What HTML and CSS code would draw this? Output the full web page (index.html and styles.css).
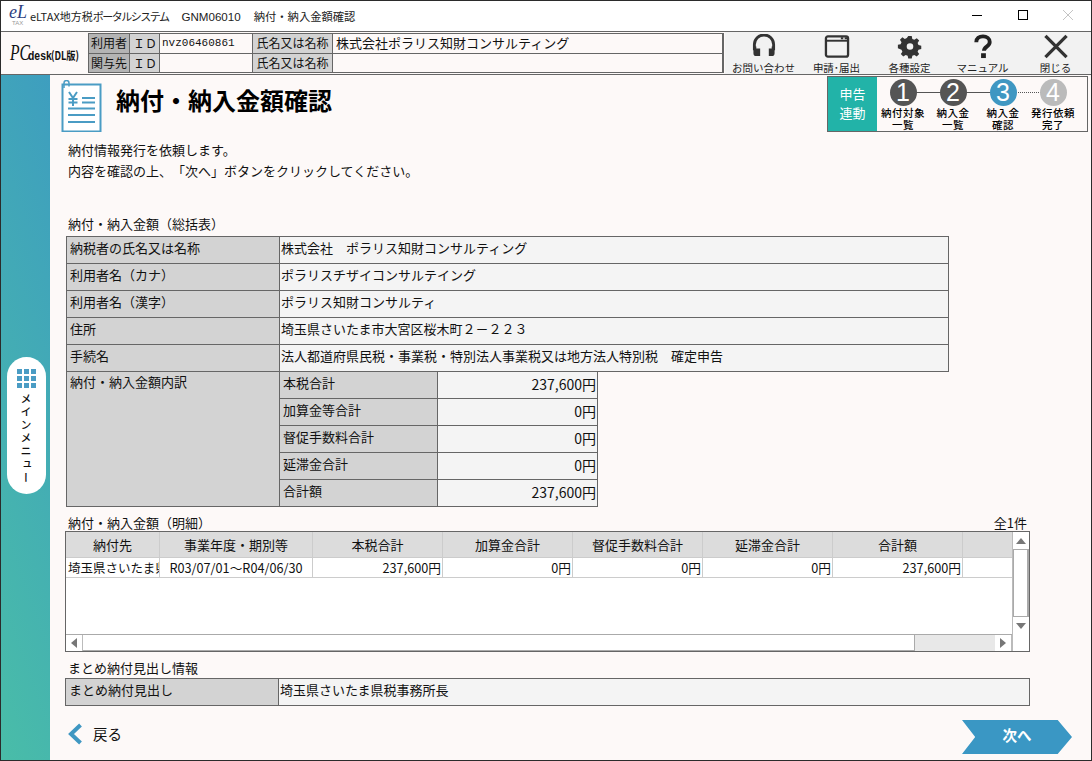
FILE: index.html
```html
<!DOCTYPE html>
<html lang="ja">
<head>
<meta charset="utf-8">
<title>納付・納入金額確認</title>
<link rel="stylesheet" href="styles.css">
</head>
<body>
<div class="window">
  <header class="titlebar">
    <div class="applogo"><span class="applogo-el">eL</span><span class="applogo-tax">TAX</span></div>
    <div class="apptitle">eLTAX地方税<span class="kana">ポータルシステム</span><span class="gap1">GNM06010</span><span class="gap2">納付・納入金額確認</span></div>
    <div class="winctl">
      <svg width="12" height="12" viewBox="0 0 12 12"><path d="M1 6.500h10" stroke="#000" fill="none"/></svg>
      <svg width="12" height="12" viewBox="0 0 12 12"><rect x="1.500" y="1.500" width="9" height="9" stroke="#000" fill="none"/></svg>
      <svg width="12" height="12" viewBox="0 0 12 12"><path d="M1 1l10 10M11 1L1 11" stroke="#c4c4c4" fill="none"/></svg>
    </div>
  </header>
  <div class="toolbar">
    <div class="brand"><span class="brand-pc">PC</span><span class="brand-desk">desk</span><span class="brand-dl">(DL版)</span></div>
    <div class="userinfo">
      <div class="ui-h ui-dark">利用者</div><div class="ui-h ui-id">ＩＤ</div><div class="ui-v ui-mono">nvz06460861</div><div class="ui-h">氏名又は名称</div><div class="ui-v">株式会社ポラリス知財コンサルティング</div>
      <div class="ui-h ui-dark">関与先</div><div class="ui-h ui-id">ＩＤ</div><div class="ui-v"></div><div class="ui-h">氏名又は名称</div><div class="ui-v"></div>
    </div>
    <nav class="tools">
      <div class="tool">
        <svg width="26" height="26" viewBox="0 0 26 26"><path d="M3 17V11a10 10 0 0 1 20 0v6" fill="none" stroke="#333" stroke-width="3"/><path d="M2 13h3v2h4v8H5a3 3 0 0 1-3-3zM24 13h-3v2h-3v8h3a3 3 0 0 0 3-3z" fill="#333"/></svg>
        <span>お問い合わせ</span>
      </div>
      <div class="tool">
        <svg width="26" height="26" viewBox="0 0 26 26"><rect x="1.500" y="2.500" width="23" height="21" rx="2" fill="none" stroke="#333" stroke-width="2.400"/><path d="M2 7h22" stroke="#333" stroke-width="2"/><path d="M17 3.500h2.500v2H17zM21 3.500h2.500v2H21z" fill="#333"/></svg>
        <span>申請･届出</span>
      </div>
      <div class="tool">
        <svg width="26" height="26" viewBox="0 0 26 26"><path d="M11 1h4l.7 3.200 2.300 1 2.800-1.800 2.800 2.800-1.800 2.800 1 2.300 3.200.7v4l-3.200.7-1 2.300 1.800 2.800-2.800 2.800-2.800-1.800-2.300 1-.7 3.200h-4l-.7-3.200-2.300-1-2.800 1.800-2.800-2.800 1.800-2.800-1-2.300L-1 15v-4l3.200-.7 1-2.300-1.800-2.800 2.800-2.800 2.800 1.800 2.300-1zM13 9.200a3.800 3.800 0 1 0 0 7.600 3.800 3.800 0 0 0 0-7.600z" fill="#333" fill-rule="evenodd" transform="translate(1.300 1.300) scale(.9)"/></svg>
        <span>各種設定</span>
      </div>
      <div class="tool">
        <svg width="26" height="26" viewBox="0 0 26 26"><path d="M6 8.500C6 4.500 9 2.500 13 2.500s7 2.300 7 5.800c0 5-6 4.700-6 9.200" fill="none" stroke="#222" stroke-width="4"/><rect x="11" y="20" width="5" height="5" fill="#222"/></svg>
        <span>マニュアル</span>
      </div>
      <div class="tool">
        <svg width="26" height="26" viewBox="0 0 26 26"><path d="M2 2l22 22M24 2L2 24" stroke="#333" stroke-width="3.400" fill="none"/></svg>
        <span>閉じる</span>
      </div>
    </nav>
  </div>
  <div class="body">
    <aside class="sidebar">
      <div class="mainmenu">
        <div class="dots"><i></i><i></i><i></i><i></i><i></i><i></i><i></i><i></i><i></i></div>
        <div class="mm-text">メインメニュー</div>
      </div>
    </aside>
    <main class="main">
      <div class="pagehead">
        <svg class="pageicon" width="42" height="52" viewBox="0 0 42 52"><path d="M2.500 4.500h38v47h-38z" fill="#fff" stroke="#4a9cc4" stroke-width="2"/><path d="M4 8V3a2.500 2.500 0 0 1 5 0v3.500" fill="none" stroke="#4a9cc4" stroke-width="1.500"/><path d="M9 12l4 6 4-6M13 18v8M8.500 19h9M8.500 22.500h9" fill="none" stroke="#4a9cc4" stroke-width="2"/><path d="M22 18h13M22 22.500h13M8 28.500h27M8 35h27M8 42h27" stroke="#4a9cc4" stroke-width="2"/></svg>
        <h1 class="pagetitle">納付・納入金額確認</h1>
        <div class="stepper">
          <div class="link">申告<br>連動</div>
          <div class="steps">
            <div class="step"><b class="num n1">1</b><span>納付対象<br>一覧</span></div>
            <div class="step"><b class="num n1">2</b><span>納入金<br>一覧</span></div>
            <div class="step"><b class="num n3">3</b><span>納入金<br>確認</span></div>
            <div class="step"><b class="num n4">4</b><span>発行依頼<br>完了</span></div>
          </div>
        </div>
      </div>
      <div class="intro">納付情報発行を依頼します。<br>内容を確認の上、「次へ」ボタンをクリックしてください。</div>
      <div class="cap cap-first">納付・納入金額（総括表）</div>
      <div class="summary">
        <div class="th">納税者の氏名又は名称</div><div class="td">株式会社　ポラリス知財コンサルティング</div>
        <div class="th">利用者名（カナ）</div><div class="td">ポラリスチザイコンサルテイング</div>
        <div class="th">利用者名（漢字）</div><div class="td">ポラリス知財コンサルティ</div>
        <div class="th">住所</div><div class="td">埼玉県さいたま市大宮区桜木町２－２２３</div>
        <div class="th">手続名</div><div class="td">法人都道府県民税・事業税・特別法人事業税又は地方法人特別税　確定申告</div>
        <div class="th th-tall">納付・納入金額内訳</div>
        <div class="breakdown">
          <div class="bh">本税合計</div><div class="bv">237,600円</div>
          <div class="bh">加算金等合計</div><div class="bv">0円</div>
          <div class="bh">督促手数料合計</div><div class="bv">0円</div>
          <div class="bh">延滞金合計</div><div class="bv">0円</div>
          <div class="bh">合計額</div><div class="bv">237,600円</div>
        </div>
      </div>
      <div class="capline"><span>納付・納入金額（明細）</span><span class="count">全1件</span></div>
      <div class="grid">
        <div class="grid-view">
          <div class="gr gr-head">
            <div class="c c1">納付先</div><div class="c c2">事業年度・期別等</div><div class="c c3">本税合計</div><div class="c c3">加算金合計</div><div class="c c3">督促手数料合計</div><div class="c c3">延滞金合計</div><div class="c c3">合計額</div><div class="c c4"></div>
          </div>
          <div class="gr gr-row">
            <div class="c c1 cl">埼玉県さいたま県</div><div class="c c2">R03/07/01～R04/06/30</div><div class="c c3 cr">237,600円</div><div class="c c3 cr">0円</div><div class="c c3 cr">0円</div><div class="c c3 cr">0円</div><div class="c c3 cr">237,600円</div><div class="c c4"></div>
          </div>
        </div>
        <div class="vbar">
          <div class="sb-btn"><svg width="10" height="6" viewBox="0 0 10 6"><path d="M5 0l5 6H0z" fill="#777"/></svg></div>
          <div class="sb-thumb"></div>
          <div class="sb-btn"><svg width="10" height="6" viewBox="0 0 10 6"><path d="M0 0h10L5 6z" fill="#777"/></svg></div>
        </div>
        <div class="hbar">
          <div class="sb-btn"><svg width="6" height="10" viewBox="0 0 6 10"><path d="M6 0v10L0 5z" fill="#777"/></svg></div>
          <div class="sb-hthumb"></div>
          <div class="sb-track"></div>
          <div class="sb-btn"><svg width="6" height="10" viewBox="0 0 6 10"><path d="M0 0l6 5-6 5z" fill="#777"/></svg></div>
        </div>
        <div class="corner"></div>
      </div>
      <div class="cap cap-sum">まとめ納付見出し情報</div>
      <div class="sumrow"><div class="th">まとめ納付見出し</div><div class="td">埼玉県さいたま県税事務所長</div></div>
      <div class="footer">
        <div class="back"><svg width="16" height="22" viewBox="0 0 16 22"><path d="M13.500 2L4 11l9.500 9" fill="none" stroke="#3f97c2" stroke-width="4"/></svg><span class="back-label">戻る</span></div>
        <div class="next">次へ</div>
      </div>
    </main>
  </div>
</div>
</body>
</html>
```
FILE: styles.css
```css
* { box-sizing: border-box; }
html, body { margin: 0; padding: 0; }
body { width: 1092px; height: 761px; overflow: hidden; font-family: "Noto Sans CJK JP", "Noto Sans", sans-serif; font-size: 13px; color: #111; background: #fff; text-spacing-trim: space-all; }
.window { width: 1092px; height: 761px; border: 1px solid #2b2b2b; display: flex; flex-direction: column; overflow: hidden; }

.titlebar { height: 30px; flex: none; background: #fff; display: flex; align-items: center; padding-left: 8px; }
.applogo { width: 17px; height: 24px; margin-right: 4px; }
.applogo-el { font-family: "Liberation Serif", serif; font-style: italic; font-size: 18px; line-height: 16px; color: #2d3f7f; display: block; }
.applogo-tax { font-family: "Liberation Sans", sans-serif; font-size: 6px; line-height: 6px; color: #999; display: block; padding-left: 3px; }
.apptitle { font-size: 11px; color: #222; white-space: nowrap; }
.kana { letter-spacing: -1.500px; }
.gap1 { margin-left: 13px; font-family: "Liberation Sans", sans-serif; font-size: 11.600px; }
.gap2 { margin-left: 13px; font-size: 11.300px; }
.winctl { margin-left: auto; margin-bottom: 2px; display: flex; gap: 33.500px; padding-right: 17px; }

.toolbar { height: 44px; flex: none; display: flex; border-top: 1px solid #666; border-bottom: 1px solid #666; background: #fdf9f8; }
.brand { width: 83px; flex: none; margin-left: 4px; display: flex; align-items: baseline; padding: 8px 0 0 5px; white-space: nowrap; }
.brand-pc { font-family: "Liberation Serif", serif; font-style: italic; font-size: 23px; line-height: 26px; color: #111; display: inline-block; width: 18px; transform: scaleX(.68); transform-origin: left; }
.brand-desk { font-family: "Liberation Sans", sans-serif; font-weight: 700; font-size: 13px; display: inline-block; transform: scaleX(.8); transform-origin: left; width: 23px; }
.brand-dl { font-size: 11.500px; font-weight: 700; display: inline-block; transform: scaleX(.8); transform-origin: left; }
.userinfo { width: 636px; flex: none; height: 40px; margin-top: 1px; display: grid; grid-template-columns: 41px 30px 93px 80px 1fr; grid-template-rows: 20px 19px; border: 1px solid #666; border-bottom: 0; font-size: 12px; }
.ui-h { background: #d3d3d3; border-right: 1px solid #666; border-bottom: 1px solid #666; text-align: center; line-height: 18px; white-space: nowrap; }
.ui-dark { background: #b4b4b4; }
.ui-id { text-align: right; padding-right: 2px; }
.ui-v { background: #fdf9f8; border-right: 1px solid #666; border-bottom: 1px solid #666; padding-left: 3px; line-height: 18px; white-space: nowrap; font-size: 13px; }
.ui-mono { font-family: "Liberation Mono", monospace; font-size: 11px; padding-left: 2px; }
.tools { margin-left: 1px; flex: 1; display: flex; background: #f2f2f2; padding-left: 6px; }
.tool { width: 65px; margin-right: 8px; display: flex; flex-direction: column; align-items: center; font-size: 10.500px; line-height: 12px; white-space: nowrap; padding-top: 2px; color: #222; }
.tool span { margin-top: 3px; }

.body { flex: 1; display: flex; min-height: 0; background: #fdf9f8; }
.sidebar { width: 49px; flex: none; background: linear-gradient(70deg, #49bda8 0%, #3e9ebf 100%); display: flex; align-items: center; justify-content: center; }
.mainmenu { width: 39px; height: 137px; margin-top: 16px; margin-left: 1px; border-radius: 20px; background: #fff; display: flex; flex-direction: column; align-items: center; padding-top: 12px; }
.dots { width: 19px; display: grid; grid-template-columns: repeat(3, 5px); gap: 2px; }
.dots i { width: 5px; height: 5px; background: #4a9cc4; display: block; }
.mm-text { writing-mode: vertical-rl; font-size: 11px; font-weight: 500; letter-spacing: 2.200px; margin-top: 5px; line-height: 12px; }

.main { flex: 1; min-width: 0; padding-left: 16px; display: flex; flex-direction: column; }
.pagehead { height: 57px; flex: none; display: flex; align-items: flex-start; }
.pageicon { margin-left: -6px; margin-top: 5px; flex: none; }
.pagetitle { margin: 8px 0 0 14px; font-size: 24px; line-height: 34px; font-weight: 700; color: #000; white-space: nowrap; }
.stepper { margin-left: auto; margin-right: 3px; margin-top: 1px; width: 261px; height: 56px; border: 1px solid #666; display: flex; }
.link { width: 49px; background: #22b3a8; color: #fff; font-size: 13px; line-height: 19px; text-align: center; padding-top: 7px; }
.steps { flex: 1; display: flex; padding-left: 1px; background-image: linear-gradient(#555, #555), repeating-linear-gradient(90deg, #555 0 1px, transparent 1px 2px); background-size: 100px 1px, 50px 1px; background-repeat: no-repeat, no-repeat; background-position: 25px 15px, 125px 15px; }
.step { width: 50px; display: flex; flex-direction: column; align-items: center; padding-top: 2px; }
.step span { font-size: 10.500px; line-height: 12px; letter-spacing: .5px; text-align: center; font-weight: 500; white-space: nowrap; margin-top: 1px; color: #000; }
.num { width: 27px; height: 27px; border-radius: 50%; color: #fff; font: 400 25px/27px "Liberation Sans", sans-serif; text-align: center; display: block; flex: none; }
.n1 { background: #555; }
.n3 { background: #3f97c2; }
.n4 { background: #bbb; }

.intro { line-height: 21px; padding-top: 7px; padding-left: 2px; font-size: 13px; height: 53px; flex: none; }
.cap { font-size: 13px; line-height: 16px; flex: none; padding-left: 2px; }
.cap-first { margin-top: 31px; margin-bottom: 4px; }
.summary { width: 883px; flex: none; display: grid; grid-template-columns: 213px 1fr; border: 1px solid #666; border-width: 1px 0 0 1px; }
.th { background: #d3d3d3; border-right: 1px solid #666; border-bottom: 1px solid #666; height: 27px; padding: 2px 0 0 3px; line-height: 18px; white-space: nowrap; }
.td { background: #f4f4f4; border-right: 1px solid #666; border-bottom: 1px solid #666; height: 27px; padding: 2px 0 0 1px; line-height: 18px; white-space: nowrap; font-size: 13px; }
.th-tall { height: 135px; padding-top: 1px; }
.breakdown { width: 318px; height: 135px; display: grid; grid-template-columns: 158px 1fr; background: #fdf9f8; }
.bh { background: #d3d3d3; border-right: 1px solid #666; border-bottom: 1px solid #666; padding: 2px 0 0 3px; line-height: 18px; font-size: 13px; white-space: nowrap; }
.bv { background: #f4f4f4; border-right: 1px solid #666; border-bottom: 1px solid #666; padding-top: 3px; padding-right: 1px; text-align: right; line-height: 18px; font-size: 14px; }

.capline { width: 963px; height: 24px; flex: none; padding: 8px 2px 0 2px; display: flex; justify-content: space-between; font-size: 13px; line-height: 16px; }
.grid { width: 965px; height: 121px; flex: none; margin-left: -1px; border: 1px solid #666; background: #fff; display: grid; grid-template-columns: 1fr 17px; grid-template-rows: 102px 17px; font-size: 13px; }
.grid-view { overflow: hidden; }
.gr { display: flex; }
.gr-head { height: 26px; background: #dcdcdc; border-bottom: 1px solid #ccc; line-height: 25px; text-align: center; }
.gr-row { height: 20px; border-bottom: 1px solid #ccc; line-height: 19px; white-space: nowrap; font-size: 12.700px; }
.c { border-right: 1px solid #ccc; flex: none; overflow: hidden; text-align: center; }
.c1 { width: 94px; }
.c2 { width: 153px; }
.c3 { width: 130px; }
.c4 { width: 50px; border-right: 0; }
.cl { text-align: left; padding-left: 2px; font-size: 12.500px; }
.cr { text-align: right; padding-right: 1px; }
.vbar { display: flex; flex-direction: column; border-left: 1px solid #bbb; background: #fff; }
.sb-btn { flex: none; display: flex; align-items: center; justify-content: center; background: #fff; }
.vbar .sb-btn { height: 17px; }
.sb-thumb { flex: 1; border: 1px solid #aaa; border-right-width: 2px; }
.hbar { display: flex; border-top: 1px solid #aaa; }
.hbar .sb-btn { width: 17px; border-right: 1px solid #bbb; }
.sb-hthumb { width: 832px; background: #fff; border-right: 1px solid #aaa; border-bottom: 1px solid #aaa; }
.sb-track { flex: 1; background: #e8e8e8; }
.corner { background: #fff; border-left: 1px solid #bbb; }
.cap-sum { margin-top: 8px; margin-bottom: 2px; }
.sumrow { width: 965px; margin-left: -1px; flex: none; display: grid; grid-template-columns: 213px 1fr; border: 1px solid #666; border-width: 1px 0 0 1px; }
.footer { flex: 1; width: 1005px; margin-left: 1px; display: flex; justify-content: space-between; align-items: flex-start; padding-top: 14px; }
.back { display: flex; align-items: center; gap: 10px; font-size: 14.500px; height: 22px; margin-top: 3px; }
.back-label { margin-top: -1px; }
.next { width: 110px; height: 34px; background: #3a97c4; clip-path: polygon(0 0, 87% 0, 100% 50%, 87% 100%, 0 100%, 12% 50%); color: #fff; font-weight: 700; font-size: 14.500px; line-height: 30px; text-align: center; }
```
